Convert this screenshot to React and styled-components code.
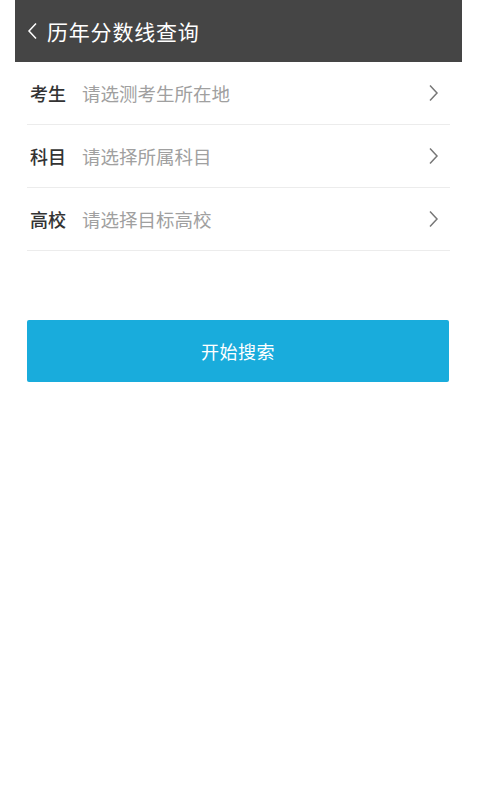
import React from 'react';
import styled, {createGlobalStyle} from "styled-components";

const GlobalStyle = createGlobalStyle`
  html, body {
    margin: 0;
    padding: 0;
    background: #ffffff;
    font-family: "Noto Sans CJK SC", "Noto Sans", sans-serif;
  }
`;

const Page = styled.div`
  width: 477px;
  min-height: 797px;
  background: #fff;
`;

const Header = styled.header`
  margin: 0 15px;
  height: 62px;
  background: #454545;
  display: flex;
  align-items: center;
  padding-left: 12px;
  gap: 9px;
  color: #fff;
`;

const Title = styled.h1`
  margin: 0;
  font-size: 21px;
  font-weight: 400;
  letter-spacing: 0.8px;
`;

const List = styled.div`
  margin: 0 27px;
`;

const Row = styled.div`
  height: 62px;
  border-bottom: 1px solid #ececec;
  display: flex;
  align-items: center;
  padding-left: 3px;
`;

const Label = styled.span`
  font-size: 18px;
  color: #333;
  font-weight: 500;
  width: 52px;
`;

const Placeholder = styled.span`
  flex: 1;
  font-size: 18.5px;
  color: #a0a0a0;
`;

const Arrow = styled.svg`
  margin-right: 11px;
`;

const SearchButton = styled.button`
  display: block;
  margin: 69px 28px 0 27px;
  width: 422px;
  height: 62px;
  border: none;
  border-radius: 2px;
  background: #19acdc;
  color: #fff;
  font-family: inherit;
  font-size: 18px;
  letter-spacing: 0.5px;
`;

function Chevron({color = '#666', left = false, ...rest}) {
    return (
        <svg width="11" height="18" viewBox="0 0 11 18" {...rest}>
            <path d={left ? "M9 1.5 L2 9 L9 16.5" : "M2 1.5 L9 9 L2 16.5"}
                  fill="none" stroke={color} strokeWidth="1.5"/>
        </svg>
    );
}

const fields = [
    {label: '考生', hint: '请选测考生所在地'},
    {label: '科目', hint: '请选择所属科目'},
    {label: '高校', hint: '请选择目标高校'},
];

export default function App() {
    return (
        <Page>
            <GlobalStyle/>
            <Header>
                <Chevron color="#fff" left/>
                <Title>历年分数线查询</Title>
            </Header>
            <List>
                {fields.map(f => (
                    <Row key={f.label}>
                        <Label>{f.label}</Label>
                        <Placeholder>{f.hint}</Placeholder>
                        <Arrow as={Chevron} color="#777"/>
                    </Row>
                ))}
            </List>
            <SearchButton>开始搜索</SearchButton>
        </Page>
    );
}
